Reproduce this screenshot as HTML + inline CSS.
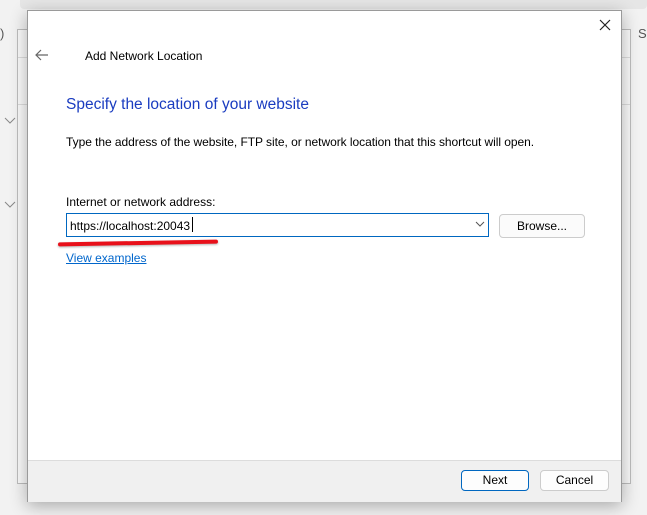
<!DOCTYPE html>
<html><head><style>
body{margin:0;width:647px;height:515px;background:#f2f2f2;position:relative;overflow:hidden;font-family:"Liberation Sans",sans-serif;}
.a{position:absolute;}
.t{font-size:12px;color:#000;}
</style></head><body>
<div class="a" style="left:20px;top:0;width:627px;height:9px;background:#e6e6e6;border-radius:0 0 4px 4px;"></div>
<div class="a" style="left:17px;top:29px;width:612px;height:453px;background:#fafafa;border:1px solid #bdbdbd;"></div>
<div class="a" style="left:18px;top:57px;width:612px;height:1px;background:#ddd;"></div>
<div class="a" style="left:18px;top:104px;width:612px;height:1px;background:#ddd;"></div>
<div class="a t" style="left:638px;top:26px;color:#555;font-size:13px;">S</div>
<div class="a" style="left:0;top:26px;font-size:13px;color:#555;">)</div>
<svg class="a" style="left:4px;top:117px" width="12" height="8"><path d="M1 1l5 5 5-5" fill="none" stroke="#888"/></svg>
<svg class="a" style="left:4px;top:201px" width="12" height="8"><path d="M1 1l5 5 5-5" fill="none" stroke="#888"/></svg>
<div class="a" style="left:27px;top:10px;width:593px;height:490px;background:#fff;border:1px solid #9a9a9a;box-shadow:0 4px 16px rgba(0,0,0,.3);"></div>
<div class="a" style="left:28px;top:460px;width:593px;height:41px;background:#f0f0f0;border-top:1px solid #dcdcdc;"></div>
<svg class="a" style="left:598px;top:18px" width="14" height="14"><path d="M2 2l10 10M12 2L2 12" stroke="#222" stroke-width="1.2"/></svg>
<svg class="a" style="left:34px;top:48px" width="16" height="14"><path d="M14 7H2M7 2L2 7l5 5" fill="none" stroke="#666" stroke-width="1.2"/></svg>
<div class="a t" style="left:85px;top:49px;font-size:12px;">Add Network Location</div>
<div class="a" style="left:66px;top:96px;font-size:15.5px;color:#1a3cc0;">Specify the location of your website</div>
<div class="a t" style="left:66px;top:135px;letter-spacing:-0.05px;">Type the address of the website, FTP site, or network location that this shortcut will open.</div>
<div class="a t" style="left:66px;top:195px;">Internet or network address:</div>
<div class="a" style="left:66px;top:213px;width:421px;height:22px;border:1px solid #0067c0;background:#fff;"></div>
<div class="a t" style="left:70px;top:219px;">https://localhost:20043</div>
<div class="a" style="left:192px;top:217px;width:1px;height:15px;background:#000;"></div>
<svg class="a" style="left:475px;top:221px" width="10" height="7"><path d="M1 1l4 4 4-4" fill="none" stroke="#555"/></svg>
<div class="a t" style="left:499px;top:214px;width:84px;height:22px;border:1px solid #ccc;border-radius:4px;background:#fbfbfb;text-align:center;line-height:22px;">Browse...</div>
<div class="a" style="left:58px;top:241px;width:160px;height:4px;background:#e8101a;border-radius:2px;box-shadow:0 1px 2px rgba(0,0,0,.3);transform:rotate(-1deg);"></div>
<div class="a t" style="left:66px;top:251px;color:#0066cc;text-decoration:underline;">View examples</div>
<div class="a t" style="left:461px;top:470px;width:66px;height:19px;border:1px solid #0067c0;border-radius:4px;background:#fdfdfd;text-align:center;line-height:19px;">Next</div>
<div class="a t" style="left:540px;top:470px;width:67px;height:19px;border:1px solid #ccc;border-radius:4px;background:#fdfdfd;text-align:center;line-height:19px;">Cancel</div>
</body></html>
